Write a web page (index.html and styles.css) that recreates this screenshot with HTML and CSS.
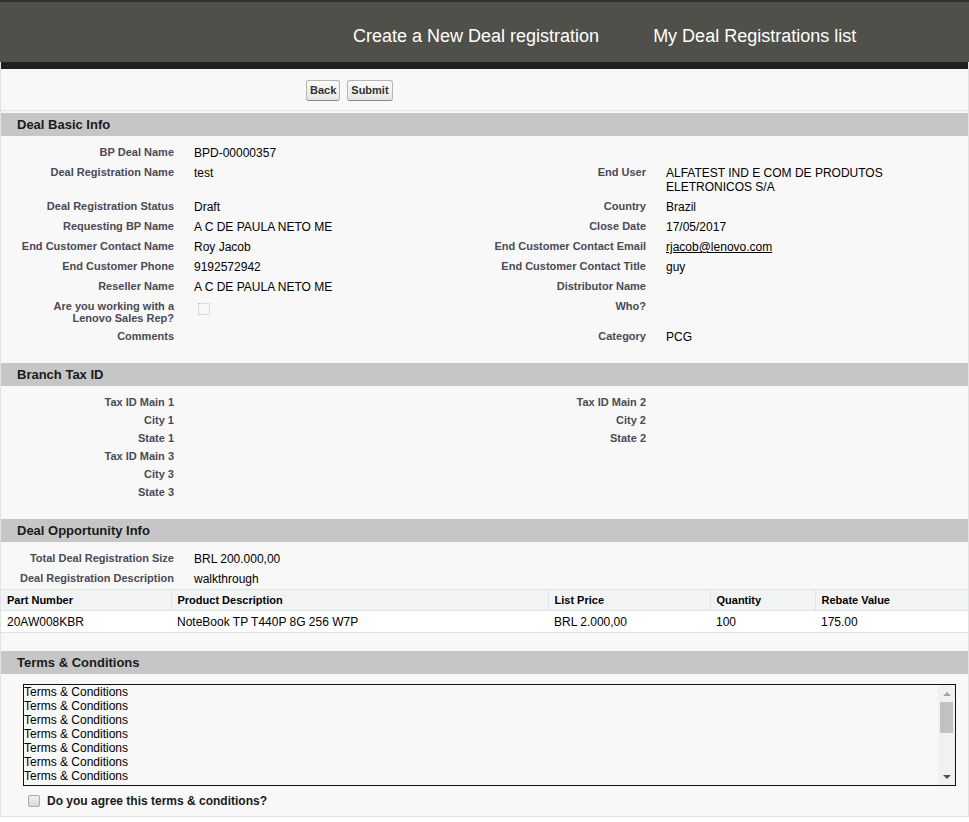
FILE: index.html
```html
<!DOCTYPE html>
<html lang="en">
<head>
<meta charset="utf-8">
<title>Deal Registration</title>
<link rel="stylesheet" href="styles.css">
</head>
<body>
<header class="topbar">
  <a class="nav-link" href="#">Create a New Deal registration</a>
  <a class="nav-link" href="#">My Deal Registrations list</a>
</header>
<main class="page">
  <div class="rule"></div>
  <div class="actions">
    <button class="btn" type="button">Back</button>
    <button class="btn" type="button">Submit</button>
  </div>

  <section class="block">
    <h3 class="block-head">Deal Basic Info</h3>
    <div class="block-body">
      <table class="detail">
        <colgroup><col class="c-label"><col class="c-data"><col class="c-label"><col class="c-data"></colgroup>
        <tr><th>BP Deal Name</th><td>BPD-00000357</td><th></th><td></td></tr>
        <tr><th>Deal Registration Name</th><td>test</td><th>End User</th><td>ALFATEST IND E COM DE PRODUTOS ELETRONICOS S/A</td></tr>
        <tr><th>Deal Registration Status</th><td>Draft</td><th>Country</th><td>Brazil</td></tr>
        <tr><th>Requesting BP Name</th><td>A C DE PAULA NETO ME</td><th>Close Date</th><td>17/05/2017</td></tr>
        <tr><th>End Customer Contact Name</th><td>Roy Jacob</td><th>End Customer Contact Email</th><td><a class="mail" href="#">rjacob@lenovo.com</a></td></tr>
        <tr><th>End Customer Phone</th><td>9192572942</td><th>End Customer Contact Title</th><td>guy</td></tr>
        <tr><th>Reseller Name</th><td>A C DE PAULA NETO ME</td><th>Distributor Name</th><td></td></tr>
        <tr><th>Are you working with a<br>Lenovo Sales Rep?</th><td><span class="fake-check"></span></td><th>Who?</th><td></td></tr>
        <tr><th>Comments</th><td></td><th>Category</th><td>PCG</td></tr>
      </table>
    </div>
  </section>

  <section class="block">
    <h3 class="block-head">Branch Tax ID</h3>
    <div class="block-body tax">
      <table class="detail">
        <colgroup><col class="c-label"><col class="c-data"><col class="c-label"><col class="c-data"></colgroup>
        <tr><th>Tax ID Main 1</th><td></td><th>Tax ID Main 2</th><td></td></tr>
        <tr><th>City 1</th><td></td><th>City 2</th><td></td></tr>
        <tr><th>State 1</th><td></td><th>State 2</th><td></td></tr>
        <tr><th>Tax ID Main 3</th><td></td><th></th><td></td></tr>
        <tr><th>City 3</th><td></td><th></th><td></td></tr>
        <tr><th>State 3</th><td></td><th></th><td></td></tr>
      </table>
    </div>
  </section>

  <section class="block">
    <h3 class="block-head">Deal Opportunity Info</h3>
    <div class="block-body opp">
      <table class="detail">
        <colgroup><col class="c-label"><col class="c-data"><col class="c-label"><col class="c-data"></colgroup>
        <tr><th>Total Deal Registration Size</th><td>BRL 200.000,00</td><th></th><td></td></tr>
        <tr><th>Deal Registration Description</th><td>walkthrough</td><th></th><td></td></tr>
      </table>
    </div>
    <table class="items">
      <colgroup><col class="i1"><col class="i2"><col class="i3"><col class="i4"><col></colgroup>
      <thead>
        <tr><th>Part Number</th><th>Product Description</th><th>List Price</th><th>Quantity</th><th>Rebate Value</th></tr>
      </thead>
      <tbody>
        <tr><td>20AW008KBR</td><td>NoteBook TP T440P 8G 256 W7P</td><td>BRL 2.000,00</td><td>100</td><td>175.00</td></tr>
      </tbody>
    </table>
  </section>

  <section class="block terms">
    <h3 class="block-head">Terms &amp; Conditions</h3>
    <div class="terms-body">
      <div class="terms-box">
        <textarea class="terms-text" readonly>Terms &amp; Conditions
Terms &amp; Conditions
Terms &amp; Conditions
Terms &amp; Conditions
Terms &amp; Conditions
Terms &amp; Conditions
Terms &amp; Conditions
Terms &amp; Conditions
Terms &amp; Conditions
Terms &amp; Conditions
Terms &amp; Conditions
Terms &amp; Conditions
Terms &amp; Conditions
Terms &amp; Conditions
Terms &amp; Conditions</textarea>
        <div class="vscroll" aria-hidden="true">
          <span class="vscroll-btn"><span class="arrow-up"></span></span>
          <span class="vscroll-track"><span class="vscroll-thumb"></span></span>
          <span class="vscroll-btn"><span class="arrow-down"></span></span>
        </div>
      </div>
      <label class="agree"><input type="checkbox" class="agree-box"><span>Do you agree this terms &amp; conditions?</span></label>
    </div>
  </section>
</main>
</body>
</html>
```

FILE: styles.css
```css
* { box-sizing: border-box; }

body {
  margin: 0;
  font-family: "Liberation Sans", Arial, sans-serif;
  background: #ffffff;
  color: #000;
}

.topbar {
  display: flex;
  gap: 54px;
  height: 62px;
  padding: 24px 0 0 353px;
  background: #50504b;
  border-top: 2px solid #2f2f2d;
}

.nav-link {
  color: #ffffff;
  font-size: 18px;
  line-height: 21px;
  text-decoration: none;
  white-space: nowrap;
}

.page {
  background: #f8f8f8;
  border-left: 1px solid #e2e2e2;
  border-right: 1px solid #e2e2e2;
  border-bottom: 1px solid #e2e2e2;
}

.rule {
  height: 7px;
  background: #1f1f1f;
}

.actions {
  display: flex;
  gap: 7px;
  padding: 11px 0 9px 305px;
  border-bottom: 1px solid #e2e2e2;
  margin-bottom: 2px;
}

.btn {
  font-family: "Liberation Sans", Arial, sans-serif;
  font-size: 11px;
  font-weight: bold;
  line-height: 13px;
  color: #333;
  padding: 3px 3px;
  border: 1px solid #b5b5b5;
  border-bottom-color: #8a8a8a;
  border-radius: 3px;
  background: linear-gradient(#fbfbfb, #e6e6e6);
}

.block-head {
  margin: 0;
  height: 23px;
  padding-left: 16px;
  background: #c6c6c6;
  font-size: 13px;
  font-weight: bold;
  line-height: 23px;
  color: #1a1a1a;
}

.block-body {
  padding: 7px 0 16px 13px;
}

.block-body.tax {
  padding-bottom: 18px;
}

.block-body.opp {
  padding-bottom: 0;
}

.detail {
  width: 944px;
  table-layout: fixed;
  border-collapse: collapse;
}

.c-label { width: 170px; }
.c-data { width: 302px; }

.detail th {
  padding: 3px 10px 3px 2px;
  text-align: right;
  vertical-align: top;
  font-size: 11px;
  font-weight: bold;
  line-height: 12px;
  color: #4a4a56;
}

.detail td {
  padding: 3px 10px;
  vertical-align: top;
  font-size: 12px;
  line-height: 14px;
  color: #000;
}

.mail {
  color: #000;
  text-decoration: underline;
}

.fake-check {
  display: block;
  width: 12px;
  height: 12px;
  margin: 3px 0 0 4px;
  border: 1px dotted #c4c4c4;
}

.items {
  width: 100%;
  table-layout: fixed;
  border-collapse: collapse;
  border-top: 1px solid #e0e3e5;
}

.i1 { width: 170px; }
.i2 { width: 377px; }
.i3 { width: 162px; }
.i4 { width: 105px; }

.items th {
  padding: 4px 2px 4px 6px;
  background: #f2f3f3;
  border-bottom: 1px solid #e0e3e5;
  border-left: 1px solid #e0e3e5;
  text-align: left;
  font-size: 11px;
  font-weight: bold;
  line-height: 12px;
  color: #000;
}

.items th:first-child {
  border-left: 0;
}

.items td {
  padding: 4px 2px 3px 6px;
  background: #ffffff;
  border-bottom: 1px solid #e3e3e3;
  font-size: 12px;
  line-height: 14px;
  color: #000;
}

.terms {
  margin-top: 18px;
}

.terms-body {
  padding: 10px 0 8px 22px;
}

.terms-box {
  display: flex;
  width: 933px;
  height: 102px;
  border: 1px solid #111;
}

.terms-text {
  flex: 1;
  display: block;
  margin: 0;
  padding: 0;
  border: 0;
  background: transparent;
  font-family: "Liberation Sans", Arial, sans-serif;
  font-size: 12px;
  line-height: 14px;
  color: #000;
  resize: none;
  overflow: hidden;
  outline: none;
}

.vscroll {
  display: flex;
  flex-direction: column;
  width: 17px;
  background: #f1f1f1;
}

.vscroll-btn {
  display: flex;
  align-items: center;
  justify-content: center;
  height: 17px;
}

.arrow-up {
  width: 0;
  height: 0;
  border-left: 4px solid transparent;
  border-right: 4px solid transparent;
  border-bottom: 4px solid #a3a3a3;
}

.arrow-down {
  width: 0;
  height: 0;
  border-left: 4px solid transparent;
  border-right: 4px solid transparent;
  border-top: 4px solid #505050;
}

.vscroll-track {
  flex: 1;
  padding: 0 2px;
}

.vscroll-thumb {
  display: block;
  height: 31px;
  background: #c1c1c1;
}

.agree {
  display: flex;
  align-items: center;
  margin-top: 8px;
  font-size: 12px;
  font-weight: bold;
  line-height: 14px;
  color: #1a1a1a;
}

.agree-box {
  appearance: none;
  width: 12px;
  height: 12px;
  margin: 0 7px 0 5px;
  border: 1px solid #ababab;
  border-radius: 2px;
  background: linear-gradient(#f0f0f0, #d9d9d9);
}
```
